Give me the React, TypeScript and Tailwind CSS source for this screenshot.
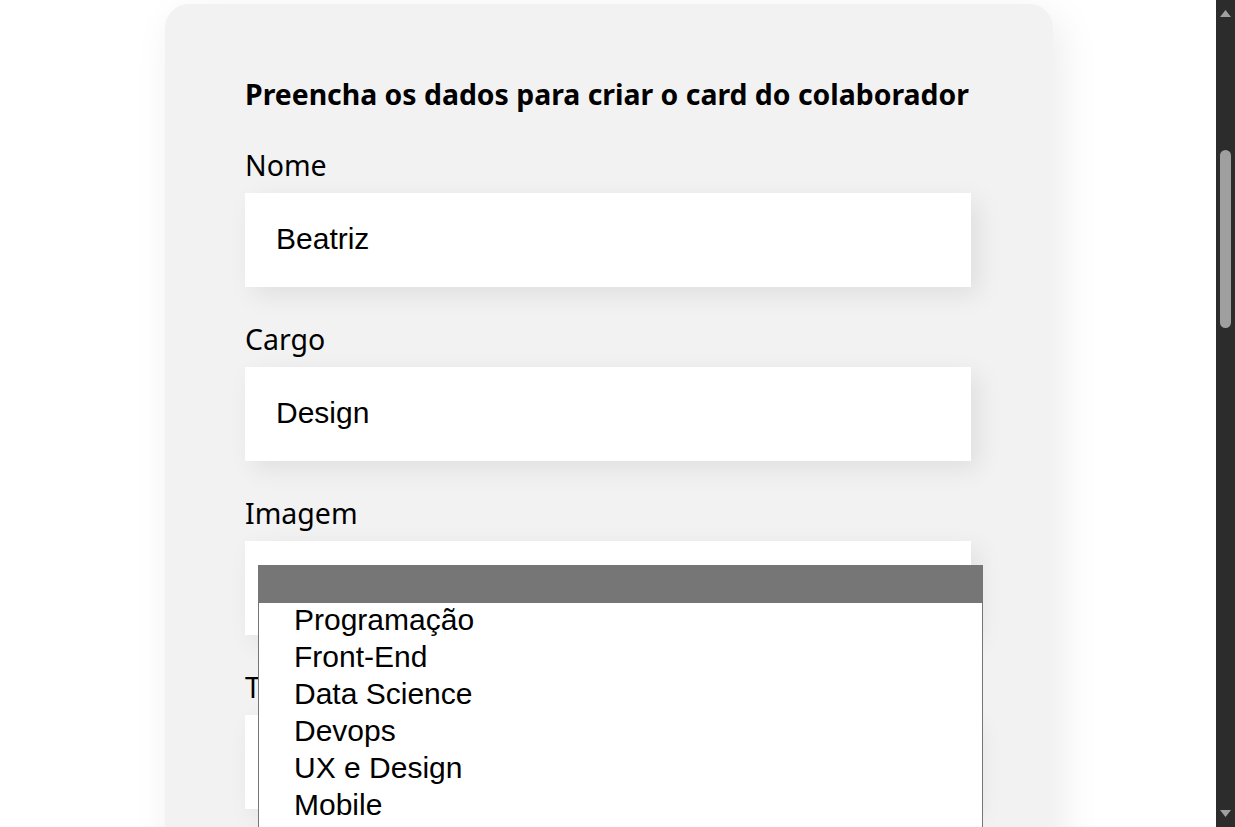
const options = ["Programação", "Front-End", "Data Science", "Devops", "UX e Design", "Mobile"];

function Campo({ label, value }: { label: string; value?: string }) {
  return (
    <div className="flex flex-col">
      <label className="text-[28.5px] leading-[36px] mb-[10px] text-black">{label}</label>
      <div className="h-[94px] bg-white flex items-center pl-[31px] pb-[4px] shadow-[8px_8px_24px_rgba(0,0,0,0.08)] text-[30px] text-black font-['Liberation_Sans',Arial,sans-serif]">
        {value}
      </div>
    </div>
  );
}

export default function App() {
  return (
    <div className="flex h-[827px] overflow-hidden bg-white">
      <div className="flex-1 relative pl-[2px]">
        <div className="w-[888px] mx-auto mt-[4px] bg-[#f2f2f2] rounded-[24px] shadow-[8px_12px_40px_rgba(0,0,0,0.08)] pl-[80px] pr-[82px] pt-[72px] pb-[60px] font-['Noto_Sans',sans-serif]">
          <h2 className="text-[28.4px] leading-[36px] font-bold text-black mb-[35px] whitespace-nowrap">
            Preencha os dados para criar o card do colaborador
          </h2>
          <div className="flex flex-col gap-[34px]">
            <Campo label="Nome" value="Beatriz" />
            <Campo label="Cargo" value="Design" />
            <Campo label="Imagem" />
            <Campo label="Time" />
          </div>
        </div>
        {/* select aberto */}
        <div className="absolute left-[258px] top-[565px] w-[725px] h-[300px] bg-white border border-[#767676] font-['Liberation_Sans',Arial,sans-serif] text-[30px] text-black">
          <div className="h-[37px] bg-[#767676]" />
          {options.map((o) => (
            <div key={o} className="h-[37px] leading-[33px] pl-[35px]">
              {o}
            </div>
          ))}
        </div>
      </div>
      <div className="w-[19px] bg-[#2c2c2c] flex flex-col items-center justify-between py-[10px] relative">
        <svg width="11" height="7" viewBox="0 0 11 7">
          <path d="M5.5 0L11 7H0z" fill="#a0a0a0" />
        </svg>
        <div className="absolute top-[150px] left-[4px] w-[11px] h-[178px] rounded-full bg-[#9f9f9f]" />
        <svg width="11" height="7" viewBox="0 0 11 7">
          <path d="M5.5 7L11 0H0z" fill="#a0a0a0" />
        </svg>
      </div>
    </div>
  );
}
